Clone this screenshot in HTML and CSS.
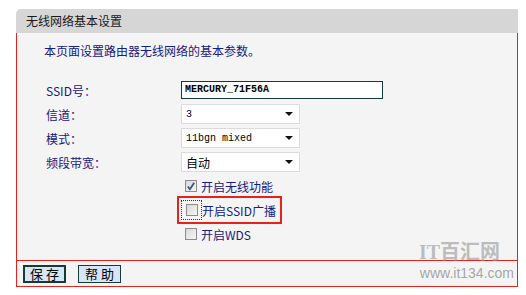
FILE: index.html
```html
<!DOCTYPE html>
<html>
<head>
    <meta charset="utf-8">
    <link rel="stylesheet" href="styles.css">
</head>
<body>

    <div class="panel">
        <div class="panel-title">无线网络基本设置</div>

        <div class="panel-body">
            <p class="intro">本页面设置路由器无线网络的基本参数。</p>

            <div class="form">
                <!-- SSID -->
                <div class="row">
                    <span class="label">SSID号：</span>
                    <span class="text-input">MERCURY_71F56A</span>
                </div>
                <!-- Channel -->
                <div class="row">
                    <span class="label">信道：</span>
                    <span class="select"><span class="mono">3</span><i class="arrow"></i></span>
                </div>
                <!-- Mode -->
                <div class="row">
                    <span class="label">模式：</span>
                    <span class="select"><span class="mono">11bgn mixed</span><i class="arrow"></i></span>
                </div>
                <!-- Bandwidth -->
                <div class="row">
                    <span class="label">频段带宽：</span>
                    <span class="select"><span>自动</span><i class="arrow"></i></span>
                </div>

                <div class="row">
                    <span></span>
                    <span class="check-item"><span class="box checked">
                        <svg width="11" height="11" viewBox="0 0 11 11"><path d="M2 5.5 L4.3 8.5 L9 1.5" fill="none" stroke="#3a5487" stroke-width="2"/></svg>
                    </span>开启无线功能</span>
                </div>
                <div class="row">
                    <span></span>
                    <span class="check-item marked"><span class="focus"><span class="box"></span></span>开启SSID广播</span>
                </div>
                <div class="row">
                    <span></span>
                    <span class="check-item"><span class="box"></span>开启WDS</span>
                </div>
            </div>
        </div>

        <div class="panel-foot">
            <button class="btn btn-main">保 存</button>
            <button class="btn">帮 助</button>
        </div>
    </div>

    <!-- watermark over the bottom right corner -->
    <div class="watermark">
        <div class="wm-name">IT百汇网</div>
        <div class="wm-url">www.it134.com</div>
    </div>

</body>
</html>
```

FILE: styles.css
```css
* {
    margin: 0;
    padding: 0;
    box-sizing: border-box;
}

body {
    font-family: "Noto Sans CJK SC", "Liberation Sans", sans-serif;
    font-size: 12px;
    background-color: #fff;
    position: relative;
    overflow: hidden;
}

.panel {
    margin: 9px 0 0 16px;
    width: 502px;
}

.panel-title {
    height: 24px;
    line-height: 24px;
    padding-left: 10px;
    background-color: #d6d6d6;
    border-top-left-radius: 5px;
    color: #1a1a1a;
    font-size: 12px;
}

.panel-body {
    background-color: #f4f4f4;
    border-left: 1px solid #e6231b;
    border-right: 1px solid #e6231b;
    padding: 10px 0 14px 27px;
}

.intro {
    line-height: 16px;
    color: #14207e;
}

/* Form rows */
.form {
    margin-top: 19px;
    margin-left: 2px;
}

.row {
    display: grid;
    grid-template-columns: 135px auto;
    justify-items: start;
    align-items: center;
    height: 24px;
}

.label {
    color: #14207e;
}

.mono,
.text-input {
    font-family: "Liberation Mono", monospace;
    font-size: 10px;
}

.text-input {
    width: 202px;
    height: 18px;
    line-height: 16px;
    padding-left: 3px;
    background-color: #fff;
    border: 1px solid #123a34;
    color: #000;
    font-weight: bold;
}

.select {
    display: flex;
    align-items: center;
    justify-content: space-between;
    width: 119px;
    height: 20px;
    padding: 0 6px 0 4px;
    background-color: #fff;
    border: 1px solid #dcdcdc;
    color: #000;
}

.arrow {
    width: 0;
    height: 0;
    border-left: 4px solid transparent;
    border-right: 4px solid transparent;
    border-top: 4px solid #111;
}

/* Checkboxes */
.check-item {
    display: flex;
    align-items: center;
    color: #14207e;
    margin-left: 4px;
}

.box {
    display: flex;
    align-items: center;
    justify-content: center;
    width: 12px;
    height: 12px;
    margin-right: 4px;
    border: 1px solid #8c8c8c;
    background: linear-gradient(135deg, #d8d8d8, #f6f6f6);
}

.check-item.marked {
    margin-left: 0;
    outline: 2px solid #e6231b;
    outline-offset: 2px;
    padding-right: 2px;
}

.focus {
    display: flex;
    align-items: center;
    padding: 3px 0 3px 4px;
    border: 1px dotted #333;
}

.focus .box {
    margin-right: 3px;
}

/* Footer */
.panel-foot {
    display: flex;
    gap: 12px;
    height: 27px;
    padding: 4px 0 0 6px;
    background-color: #f4f4f4;
    border: 1px solid #e6231b;
}

.btn {
    width: 43px;
    height: 18px;
    font-family: "Noto Sans CJK SC", sans-serif;
    font-size: 13px;
    line-height: 14px;
    color: #000;
    background-color: #d7e5f9;
    border: 1px solid #143b36;
}

.btn-main {
    border-width: 2px;
}

/* Watermark */
.watermark {
    position: absolute;
    left: 414px;
    top: 240px;
    text-align: right;
    width: 100px;
}

.wm-name {
    font-family: "Liberation Serif", "Noto Sans CJK SC", serif;
    font-size: 20px;
    font-weight: bold;
    line-height: 24px;
    color: rgba(150, 150, 150, 0.6);
    padding-right: 14px;
}

.wm-url {
    font-family: "Liberation Sans", sans-serif;
    font-size: 14px;
    line-height: 16px;
    margin-top: 1px;
    color: rgba(130, 130, 130, 0.7);
}
```
